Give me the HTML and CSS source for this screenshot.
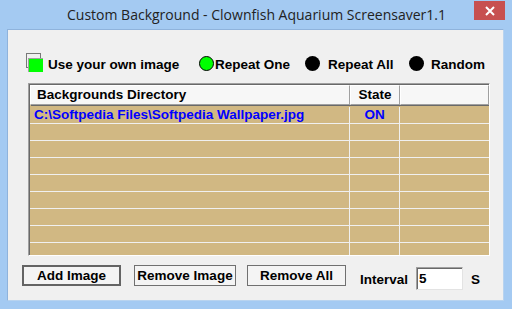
FILE: index.html
```html
<!DOCTYPE html>
<html>
<head>
<meta charset="utf-8">
<link rel="stylesheet" href="styles.css">
</head>
<body>
<div class="window">
  <div class="titlebar">
    <span class="title">Custom Background - Clownfish Aquarium Screensaver1.1</span>
    <div class="close"><svg width="10" height="10" viewBox="0 0 10 10"><path d="M1 1 L9 9 M9 1 L1 9" stroke="#fff" stroke-width="2"/></svg></div>
  </div>
  <div class="client">
    <div class="options">
      <svg class="check" width="17" height="19" viewBox="0 0 17 19">
        <rect x="0.5" y="0.5" width="14" height="14" fill="none" stroke="#000" stroke-width="1" stroke-dasharray="1 1"/>
        <rect x="2" y="5" width="15" height="14" fill="#a0a0a0"/>
        <rect x="3" y="6" width="14" height="13" fill="#00ff00"/>
      </svg>
      <span class="label l1">Use your own image</span>
      <span class="radio on"></span>
      <span class="label l2">Repeat One</span>
      <span class="radio"></span>
      <span class="label l3">Repeat All</span>
      <span class="radio"></span>
      <span class="label l4">Random</span>
    </div>
    <div class="table">
      <div class="thead">
        <div class="th left">Backgrounds Directory</div>
        <div class="th">State</div>
        <div class="th"></div>
      </div>
      <div class="tbody">
        <div class="tr"><div class="td path">C:\Softpedia Files\Softpedia Wallpaper.jpg</div><div class="td state">ON</div><div class="td"></div></div>
        <div class="tr"><div class="td"></div><div class="td"></div><div class="td"></div></div>
        <div class="tr"><div class="td"></div><div class="td"></div><div class="td"></div></div>
        <div class="tr"><div class="td"></div><div class="td"></div><div class="td"></div></div>
        <div class="tr"><div class="td"></div><div class="td"></div><div class="td"></div></div>
        <div class="tr"><div class="td"></div><div class="td"></div><div class="td"></div></div>
        <div class="tr"><div class="td"></div><div class="td"></div><div class="td"></div></div>
        <div class="tr"><div class="td"></div><div class="td"></div><div class="td"></div></div>
        <div class="tr"><div class="td"></div><div class="td"></div><div class="td"></div></div>
      </div>
    </div>
    <div class="actions">
      <button class="btn default b1">Add Image</button>
      <button class="btn b2">Remove Image</button>
      <button class="btn b3">Remove All</button>
      <span class="interval">Interval</span>
      <div class="input">5</div>
      <span class="unit">S</span>
    </div>
  </div>
</div>
</body>
</html>
```
FILE: styles.css
```css
html, body {
  margin: 0;
  padding: 0;
}
body {
  width: 512px;
  height: 309px;
  background: #a4caf2;
  overflow: hidden;
  font-family: "Liberation Sans", Arial, sans-serif;
}
.window {
  width: 512px;
  height: 309px;
}
.titlebar {
  position: relative;
  height: 29px;
  display: flex;
  justify-content: center;
  align-items: center;
}
.title {
  font-family: "Open Sans", "Noto Sans", sans-serif;
  font-size: 14px;
  color: #222;
  margin-top: -1px;
  margin-left: 1px;
}
.close {
  position: absolute;
  left: 474px;
  top: 1px;
  width: 31px;
  height: 19px;
  background: #c75050;
  display: flex;
  align-items: center;
  justify-content: center;
}
.close svg { display: block; }
.client {
  margin-left: 7px;
  width: 497px;
  height: 272px;
  background: #f0f0f0;
  border: 1px solid #8fb3dc;
  border-right-color: #b8d3ef;
  border-bottom-color: #b8d3ef;
  box-sizing: border-box;
  padding-top: 23px;
  font-size: 13.5px;
  font-weight: bold;
  color: #000;
}
.options {
  display: flex;
  align-items: flex-start;
  height: 20px;
  margin-left: 18px;
}
.check { display: block; flex: none; }
.label {
  line-height: 16px;
  margin-top: 4px;
  white-space: nowrap;
  flex: none;
}
.l1 { margin-left: 5px; width: 151px; }
.l2 { margin-left: 1px; width: 90px; }
.l3 { margin-left: 8px; width: 81px; }
.l4 { margin-left: 7px; }
.radio {
  flex: none;
  width: 15px;
  height: 15px;
  border-radius: 50%;
  background: #000;
  margin-top: 3px;
}
.radio.on {
  background: #00ff00;
  box-sizing: border-box;
  border: 1px solid #000;
}
.table {
  margin-top: 10px;
  margin-left: 20px;
  width: 462px;
  height: 173px;
  box-sizing: border-box;
  border-top: 1px solid #a0a0a0;
  border-left: 1px solid #a0a0a0;
  border-right: 1px solid #ffffff;
  border-bottom: 1px solid #ffffff;
  box-shadow: inset 1px 1px 0 #696969;
  padding: 1px 0 0 1px;
  overflow: hidden;
  background: #d1b883;
}
.thead {
  display: grid;
  grid-template-columns: 320px 50px 1fr;
  height: 20px;
  background: #f0f0f0;
}
.th {
  box-sizing: border-box;
  border-top: 1px solid #ffffff;
  border-left: 1px solid #ffffff;
  border-right: 1px solid #a0a0a0;
  border-bottom: 1px solid #a0a0a0;
  box-shadow: 1px 1px 0 #696969;
  line-height: 17px;
  text-align: center;
  background: #f7f7f7;
  position: relative;
}
.th.left {
  text-align: left;
  padding-left: 6px;
}
.tbody {
  padding-top: 2px;
}
.tr {
  display: grid;
  grid-template-columns: 320px 50px 1fr;
  height: 17px;
  box-sizing: border-box;
  border-bottom: 1px solid #f0f0f0;
}
.td {
  border-right: 1px solid #f0f0f0;
  line-height: 16px;
  color: #0000ff;
  white-space: nowrap;
  overflow: hidden;
}
.td:last-child { border-right: none; }
.path { padding-left: 4px; }
.state { text-align: center; }
.actions {
  display: flex;
  align-items: flex-start;
  margin-top: 9px;
  margin-left: 14px;
  height: 25px;
}
.btn {
  font: inherit;
  color: #000;
  height: 21px;
  padding: 0;
  background: #f4f4f4;
  border: 1px solid #707070;
  box-sizing: border-box;
  line-height: 17px;
  flex: none;
}
.btn.default {
  border: 2px solid #646464;
  line-height: 16px;
}
.b1 { width: 99px; }
.b2 { width: 102px; margin-left: 13px; }
.b3 { width: 99px; margin-left: 11px; }
.interval {
  margin-left: 14px;
  margin-top: 7px;
  line-height: 16px;
}
.input {
  margin-left: 8px;
  margin-top: 2px;
  width: 47px;
  height: 23px;
  box-sizing: border-box;
  background: #fff;
  border-top: 1px solid #a0a0a0;
  border-left: 1px solid #a0a0a0;
  border-right: 1px solid #e3e3e3;
  border-bottom: 1px solid #e3e3e3;
  box-shadow: inset 1px 1px 0 #696969;
  padding-left: 2px;
  padding-top: 3px;
  line-height: 16px;
  font-weight: bold;
}
.unit {
  margin-left: 8px;
  margin-top: 7px;
  line-height: 16px;
}
```
